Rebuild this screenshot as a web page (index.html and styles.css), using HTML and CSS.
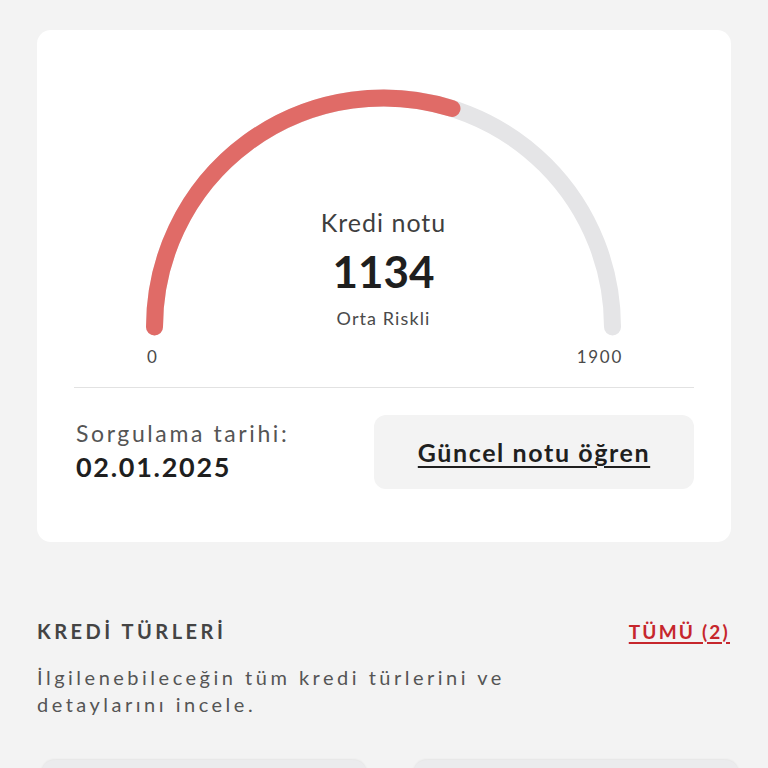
FILE: index.html
```html
<!DOCTYPE html>
<html lang="tr">
<head>
<meta charset="utf-8">
<title>Kredi notu</title>
<link rel="stylesheet" href="styles.css">
</head>
<body>
<main class="page">
  <section class="score-card">
    <div class="gauge">
      <svg class="gauge-svg" viewBox="0 0 619 260" width="619" height="260" aria-hidden="true">
        <path d="M80.5 247 A229 229 0 0 1 538.5 247" fill="none" stroke="#e5e5e7" stroke-width="17" stroke-linecap="round"/>
        <path d="M80.5 247 A229 229 0 0 1 378 28.5" fill="none" stroke="#e06b67" stroke-width="17" stroke-linecap="round"/>
      </svg>
      <div class="gauge-text">
        <div class="gauge-label">Kredi notu</div>
        <div class="gauge-value">1134</div>
        <div class="gauge-risk">Orta Riskli</div>
      </div>
    </div>
    <div class="scale">
      <span>0</span>
      <span>1900</span>
    </div>
    <div class="divider"></div>
    <div class="query-row">
      <div class="query-info">
        <div class="query-label">Sorgulama tarihi:</div>
        <div class="query-date">02.01.2025</div>
      </div>
      <a class="query-btn" href="#">Güncel notu öğren</a>
    </div>
  </section>

  <section class="types">
    <div class="types-head">
      <h2 class="types-title">KREDİ TÜRLERİ</h2>
      <a class="types-all" href="#">TÜMÜ (2)</a>
    </div>
    <p class="types-desc">İlgilenebileceğin tüm kredi türlerini ve<br>detaylarını incele.</p>
    <div class="types-list">
      <div class="type-card"></div>
      <div class="type-card"></div>
    </div>
  </section>
</main>
</body>
</html>
```

FILE: styles.css
```css
* { box-sizing: border-box; }

html, body {
  margin: 0;
  padding: 0;
  background: #f3f3f3;
  font-family: "Lato", "Noto Sans", sans-serif;
  color: #222;
  overflow: hidden;
}

.page {
  padding: 30px 0 0 37px;
  width: 768px;
}

.score-card {
  width: 694px;
  height: 512px;
  background: #fff;
  border-radius: 14px;
  padding: 50px 37px 0 37px;
}

.gauge {
  display: grid;
  width: 619px;
  height: 260px;
}

.gauge > * { grid-area: 1 / 1; }

.gauge-svg { display: block; }

.gauge-text {
  display: flex;
  flex-direction: column;
  align-items: center;
  padding-top: 127px;
}

.gauge-label {
  font-size: 25px;
  line-height: 30px;
  color: #3f3f3f;
  letter-spacing: 1px;
}

.gauge-value {
  font-size: 44px;
  line-height: 50px;
  font-weight: 700;
  color: #1f1f1f;
  margin-top: 9px;
}

.gauge-risk {
  font-size: 18px;
  line-height: 22px;
  color: #4a4a4a;
  letter-spacing: 1.1px;
  margin-top: 11px;
}

.scale {
  display: flex;
  justify-content: space-between;
  padding: 0 71px 0 73px;
  margin-top: 7px;
  font-size: 17px;
  line-height: 20px;
  color: #4a4a4a;
  letter-spacing: 1.7px;
}

.divider {
  height: 1px;
  background: #e2e2e2;
  margin-top: 20px;
}

.query-row {
  display: grid;
  grid-template-columns: 1fr 320px;
  margin-top: 27px;
  height: 74px;
}

.query-info {
  display: flex;
  flex-direction: column;
  justify-content: center;
  gap: 3px;
  padding-left: 2px;
  padding-bottom: 4px;
}

.query-label {
  font-size: 23px;
  line-height: 30px;
  color: #555;
  letter-spacing: 2.6px;
}

.query-date {
  font-size: 27px;
  line-height: 32px;
  font-weight: 700;
  color: #1f1f1f;
  letter-spacing: 1.7px;
}

.query-btn {
  display: flex;
  align-items: center;
  justify-content: center;
  background: #f3f3f3;
  border-radius: 12px;
  font-size: 25px;
  font-weight: 700;
  letter-spacing: 1.6px;
  color: #1f1f1f;
  text-decoration: underline;
  text-underline-offset: 4px;
  text-decoration-thickness: 2px;
}

.types {
  padding-right: 37px;
}

.types-head {
  display: flex;
  justify-content: space-between;
  align-items: center;
  margin-top: 77px;
  height: 24px;
}

.types-title {
  margin: 0;
  font-size: 20px;
  font-weight: 700;
  letter-spacing: 3.5px;
  color: #444;
}

.types-all {
  font-size: 19px;
  font-weight: 700;
  letter-spacing: 2.2px;
  margin-right: 1px;
  color: #c6262c;
  text-decoration: underline;
  text-underline-offset: 3px;
  text-decoration-thickness: 2px;
}

.types-desc {
  margin: 21px 0 0;
  font-size: 20px;
  line-height: 27px;
  letter-spacing: 3.5px;
  color: #555;
}

.types-list {
  display: flex;
  gap: 46px;
  margin-top: 42px;
  margin-left: 4px;
}

.type-card {
  flex: 0 0 326px;
  height: 120px;
  background: #ebebed;
  border-radius: 14px;
  box-shadow: 0 -1px 2px rgba(0,0,0,0.06);
}
```
